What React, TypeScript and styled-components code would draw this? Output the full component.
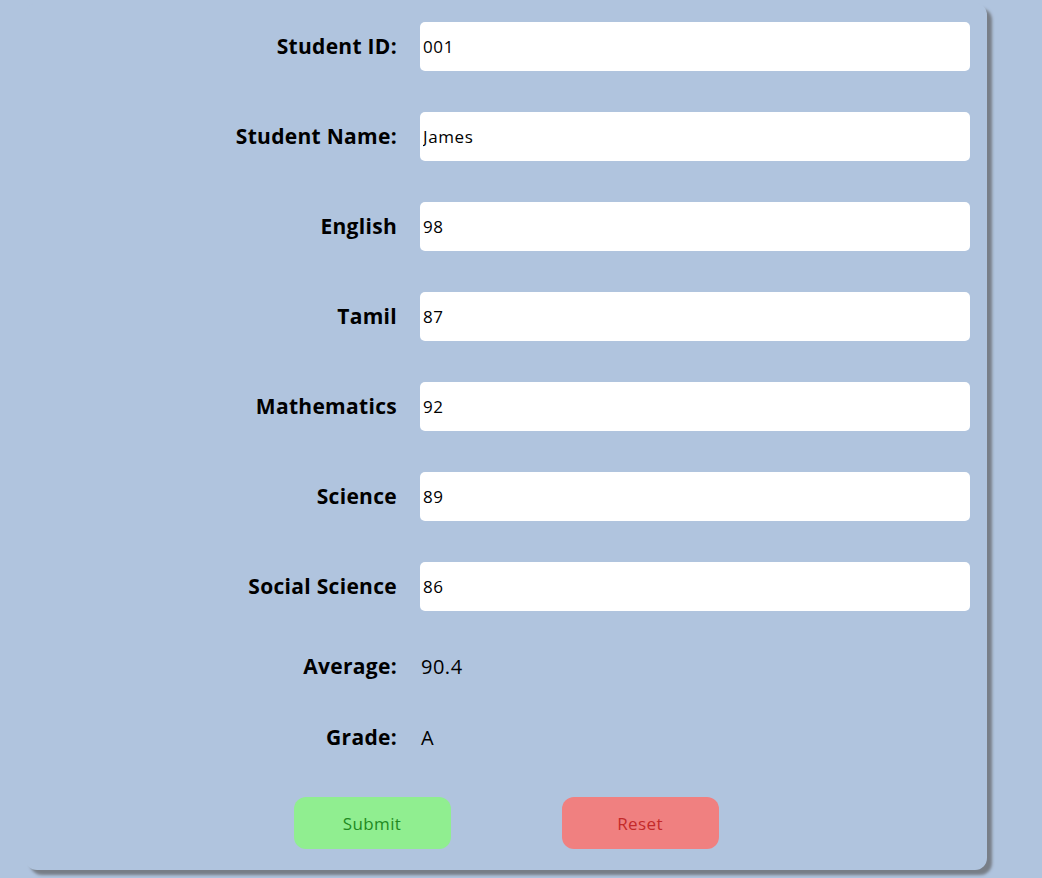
import React from "react";
import styled, { createGlobalStyle } from "styled-components";

const Global = createGlobalStyle`
  html, body { margin: 0; padding: 0; background: #b0c4de; }
  body { font-family: "Open Sans", "DejaVu Sans", sans-serif; color: #000; }
`;

const Page = styled.div`
  padding: 3px 0 12px 25px;
  width: 962px;
`;

const Card = styled.form`
  background: #b0c4de;
  border-radius: 12px;
  box-shadow: 5px 5px 3px #787e87;
  padding: 19px 17px 21px 0;
  display: flex;
  flex-direction: column;
`;

const Grid = styled.div`
  display: grid;
  grid-template-columns: 1fr 550px;
  column-gap: 23px;
  row-gap: 41px;
  align-items: center;
`;

const Label = styled.label`
  text-align: right;
  font-weight: 700;
  font-size: 21px;
  letter-spacing: 0.3px;
  line-height: 28px;
  margin-top: -2px;
`;

const Input = styled.input`
  box-sizing: border-box;
  height: 49px;
  width: 100%;
  border: none;
  border-radius: 5px;
  background: #fff;
  padding: 0 3px;
  font-family: inherit;
  font-size: 17px;
  letter-spacing: 0.6px;
  color: #000;
  outline: none;
`;

const Value = styled.div`
  font-size: 20px;
  height: 30px;
  line-height: 30px;
  padding-left: 1px;
  letter-spacing: 0.5px;
`;

const Buttons = styled.div`
  display: flex;
  justify-content: center;
  gap: 111px;
  margin-top: 44px;
  padding-left: 17px;
`;

const Button = styled.button<{ $bg: string; $fg: string }>`
  width: 157px;
  height: 52px;
  border: none;
  border-radius: 12px;
  background: ${(p) => p.$bg};
  color: ${(p) => p.$fg};
  font-family: inherit;
  font-size: 17px;
  letter-spacing: 0.4px;
  cursor: pointer;
`;

const fields: [string, string][] = [
  ["Student ID:", "001"],
  ["Student Name:", "James"],
  ["English", "98"],
  ["Tamil", "87"],
  ["Mathematics", "92"],
  ["Science", "89"],
  ["Social Science", "86"],
];

export default function App() {
  return (
    <>
      <Global />
      <Page>
        <Card onSubmit={(e) => e.preventDefault()}>
          <Grid>
            {fields.map(([l, v]) => (
              <React.Fragment key={l}>
                <Label>{l}</Label>
                <Input defaultValue={v} />
              </React.Fragment>
            ))}
            <Label>Average:</Label>
            <Value>90.4</Value>
            <Label>Grade:</Label>
            <Value>A</Value>
          </Grid>
          <Buttons>
            <Button type="submit" $bg="#90ee90" $fg="#1f8a1f">Submit</Button>
            <Button type="reset" $bg="#f08080" $fg="#c42a2a">Reset</Button>
          </Buttons>
        </Card>
      </Page>
    </>
  );
}
